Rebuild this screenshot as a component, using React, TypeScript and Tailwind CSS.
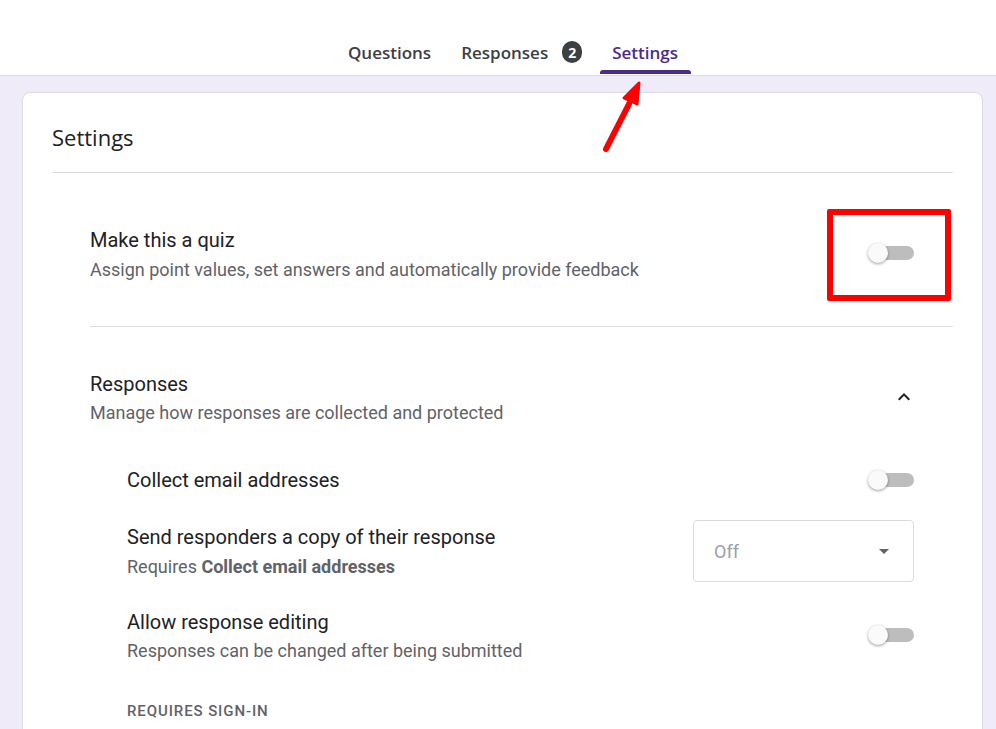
import React from "react";

function Toggle() {
  return (
    <div className="relative w-[46px] h-[24px] shrink-0">
      <div className="absolute left-[12px] top-[5px] w-[34px] h-[14px] rounded-full bg-[#bdbdbd]" />
      <div className="absolute left-0 top-[2px] w-[20px] h-[20px] rounded-full bg-[#fafafa] shadow-[0_1px_3px_rgba(0,0,0,0.4)]" />
    </div>
  );
}

export default function App() {
  const sans = { fontFamily: "Roboto, 'Open Sans', sans-serif" };
  const head = { fontFamily: "'Open Sans', Roboto, sans-serif" };
  return (
    <div className="relative w-[996px] h-[729px] overflow-hidden bg-[#f0ebf8]" style={sans}>
      {/* top tabs */}
      <div className="h-[76px] bg-white border-b border-[#dadce0] flex justify-center items-end">
        <div className="flex items-end ml-[43px]" style={head}>
          <div className="h-[36px] pt-[1px] text-[17px] font-semibold text-[#3c4043]">Questions</div>
          <div className="ml-[30px] h-[36px] pt-[1px] text-[17px] font-semibold text-[#3c4043] flex items-start">
            <span>Responses</span>
            <span className="ml-[14px] mt-[1px] w-[20px] h-[22px] rounded-full bg-[#3c4043] text-white text-[14px] font-bold flex items-center justify-center">2</span>
          </div>
          <div className="relative ml-[18px] h-[36px] pt-[1px] pl-[12px] pr-[13px] text-[17px] font-semibold text-[#4a2c8a]">
            Settings
            <div className="absolute left-0 right-0 bottom-[1px] h-[4px] rounded-t-[3px] bg-[#4a2c8a]" />
          </div>
        </div>
      </div>

      {/* card */}
      <div className="ml-[22px] mr-[13px] mt-[16px] bg-white rounded-[8px] border border-[#dadce0] px-[29px] h-[700px]">
        <div className="pt-[29px] pb-[20px] border-b border-[#dadce0] text-[22px] leading-[30px] text-[#202124]" style={head}>
          Settings
        </div>

        <div className="pl-[38px]">
          {/* quiz */}
          <div className="flex items-center justify-between pr-[39px] pt-[55px] pb-[44px] border-b border-[#dadce0]">
            <div>
              <div className="text-[20px] leading-[24px] text-[#202124]">Make this a quiz</div>
              <div className="mt-[6px] text-[18px] leading-[24px] text-[#5f6368]">Assign point values, set answers and automatically provide feedback</div>
            </div>
            <div className="mt-[-4px]"><Toggle /></div>
          </div>

          {/* responses */}
          <div className="pt-[45px] flex items-center justify-between pr-[39px]">
            <div>
              <div className="text-[20px] leading-[24px] text-[#202124]">Responses</div>
              <div className="mt-[5px] text-[18px] leading-[24px] text-[#5f6368]">Manage how responses are collected and protected</div>
            </div>
            <svg width="24" height="24" viewBox="0 0 24 24" className="mr-[-2px] mt-[-4px]">
              <path d="M7.41 15.41L12 10.83l4.59 4.58L18 14l-6-6-6 6z" fill="#202124" />
            </svg>
          </div>

          <div className="pl-[37px] pr-[39px]">
            <div className="mt-[43px] flex items-center justify-between">
              <div className="text-[20px] leading-[24px] text-[#202124]">Collect email addresses</div>
              <Toggle />
            </div>

            <div className="mt-[33px] flex items-start justify-between">
              <div>
                <div className="text-[20px] leading-[24px] text-[#202124]">Send responders a copy of their response</div>
                <div className="mt-[6px] text-[18px] leading-[24px] text-[#5f6368]">
                  Requires <span className="font-bold">Collect email addresses</span>
                </div>
              </div>
              <div className="w-[221px] h-[62px] border border-[#dadce0] rounded-[4px] flex items-center justify-between pl-[20px] pr-[24px] mt-[-5px]">
                <span className="text-[18px] text-[#9aa0a6]">Off</span>
                <svg width="10" height="5" viewBox="0 0 10 5"><path d="M0 0l5 5 5-5z" fill="#5f6368" /></svg>
              </div>
            </div>

            <div className="mt-[28px] flex items-center justify-between">
              <div>
                <div className="text-[20px] leading-[24px] text-[#202124]">Allow response editing</div>
                <div className="mt-[5px] text-[18px] leading-[24px] text-[#5f6368]">Responses can be changed after being submitted</div>
              </div>
              <div className="mt-[-3px]"><Toggle /></div>
            </div>

            <div className="mt-[38px] text-[15px] leading-[20px] font-medium tracking-[0.9px] text-[#5f6368]">REQUIRES SIGN-IN</div>
          </div>
        </div>
      </div>

      {/* annotations */}
      <div className="absolute left-[827px] top-[209px] w-[124px] h-[92px] border-[6px] border-[#ff0000] rounded-[2px]" />
      <svg className="absolute left-0 top-0" width="996" height="729" style={{ pointerEvents: "none" }}>
        <line x1="606" y1="149" x2="629" y2="104" stroke="#ff0000" strokeWidth="6" strokeLinecap="round" />
        <polygon points="639,83 624,98 637,104" fill="#ff0000" stroke="#ff0000" strokeWidth="3" strokeLinejoin="round" />
      </svg>
    </div>
  );
}
